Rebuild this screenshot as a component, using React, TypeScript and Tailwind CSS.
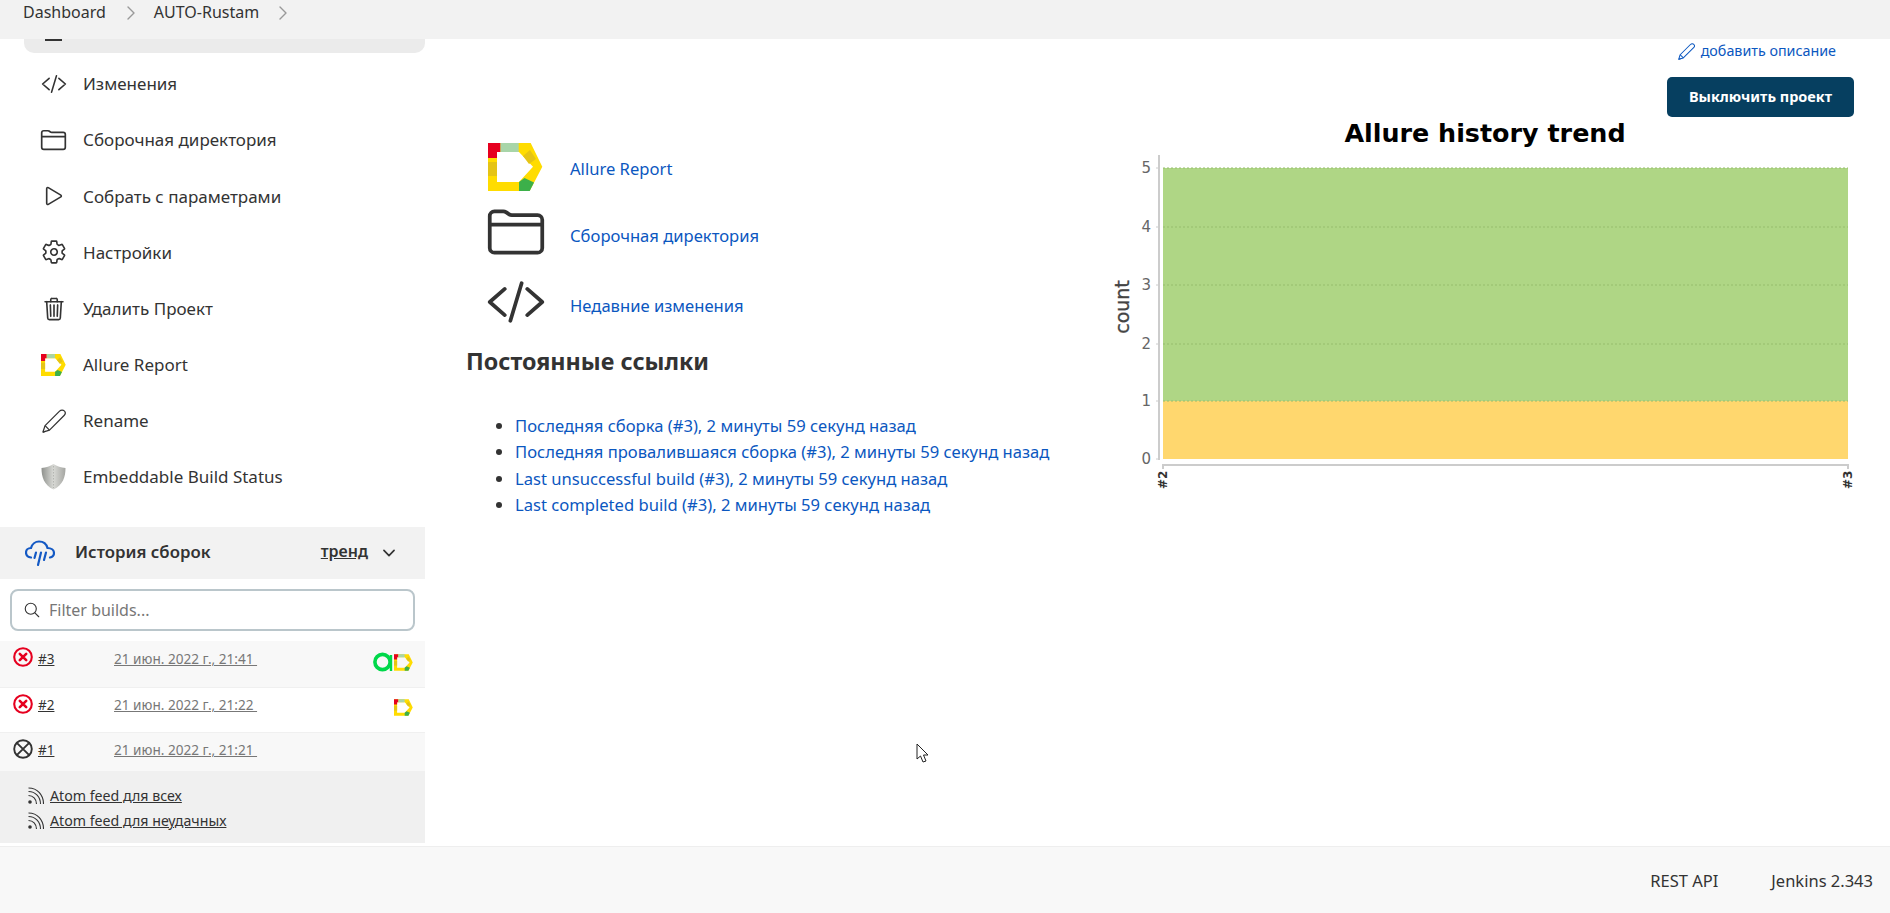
import { ChevronRight } from 'lucide-react';
import {
  IoChevronDown,
  IoCodeSlashOutline,
  IoFolderOutline,
  IoPlayOutline,
  IoSearchOutline,
  IoSettingsOutline,
  IoTrashOutline,
} from 'react-icons/io5';

function AllureIcon({ className }: { className: string }) {
  return (
    <svg viewBox="0 0 55 48" className={className}>
      <path
        fillRule="evenodd"
        fill="#ffdc00"
        d="M0 0H42.7L54.3 23.7 41.7 48H0ZM9 9V39H31L45 23.7 31 9Z"
      />
      <path fill="#e5c415" d="M0 19H9V33H0Z" />
      <path fill="#e5c415" d="M35 13L42 7 48 16 41 21Z" />
      <path fill="#e6001f" d="M0 0H12.5V9H9V15H0Z" />
      <path fill="#a8d5a8" d="M12.5 0H30.7V9H12.5Z" />
      <path fill="#3cb04a" d="M31 39L36.5 35 46 39.5 41.7 48H31Z" />
    </svg>
  );
}

function PencilIcon({ className, strokeWidth }: { className: string; strokeWidth: number }) {
  return (
    <svg viewBox="0 0 25 25" fill="none" stroke="currentColor" strokeWidth={strokeWidth} strokeLinejoin="round" className={className}>
      <path d="M1 24L3.2 17.3 18.3 2.2C19.8 0.7 22 0.7 23.2 2 24.5 3.3 24.4 5.4 23 6.8L7.8 22Z" />
      <path d="M3.2 17.3L7.8 22M1 24L4 23.2" />
    </svg>
  );
}

function RssIcon() {
  return (
    <svg viewBox="0 0 17 18" fill="none" stroke="#333" strokeWidth="1.1" className="h-[18px] w-[17px] shrink-0">
      <circle cx="3" cy="15" r="1.8" fill="#333" stroke="none" />
      <path d="M1.5 8.5C6 8.5 9.5 12 9.5 17" />
      <path d="M1.5 4.5C8.5 4.5 13.5 10 13.5 17" />
      <path d="M1.5 1C10.5 1 16.5 8 16.5 17" />
    </svg>
  );
}

function ShieldIcon() {
  return (
    <svg viewBox="0 0 25 26" className="h-[26px] w-[25px]">
      <defs>
        <linearGradient id="shield" x1="0" x2="1" y1="0" y2="0">
          <stop offset="0" stopColor="#8f918d" />
          <stop offset="0.5" stopColor="#d8d9d5" />
          <stop offset="1" stopColor="#a5a6a2" />
        </linearGradient>
      </defs>
      <path fill="url(#shield)" d="M12.5 0C9 2.5 5 3.5 0.5 4 0.5 13 3 21 12.5 25.5 22 21 24.5 13 24.5 4 20 3.5 16 2.5 12.5 0Z" />
      <path stroke="#b3b4b0" strokeDasharray="1.5 1.5" d="M12.5 2V24" />
    </svg>
  );
}

function CloudRainIcon() {
  return (
    <svg viewBox="0 0 30 27" fill="none" stroke="#1459c4" strokeWidth="2.2" strokeLinecap="round" className="h-[27px] w-[30px]">
      <path d="M6 17.5C2.5 17 1 14.5 1 12.5 1 10 3 8 6 8 7 4 10.5 1.5 14 1.5 18 1.5 21.5 4 22.5 8 26 8 29 10 29 13 29 15.5 27.5 17 25 17.5" />
      <path d="M11 12.5L9.5 18M16 12.5L13 25M21 12.5L19 20" />
    </svg>
  );
}

function FailedIcon() {
  return (
    <svg viewBox="0 0 20 20" fill="none" stroke="#e6001f" className="h-5 w-5 shrink-0">
      <circle cx="10" cy="10" r="8.8" strokeWidth="2.1" />
      <path d="M6.8 6.8L13.2 13.2M13.2 6.8L6.8 13.2" strokeWidth="2.6" strokeLinecap="round" />
    </svg>
  );
}

function AbortedIcon() {
  return (
    <svg viewBox="0 0 20 20" fill="none" stroke="#333" strokeWidth="1.9" className="h-5 w-5 shrink-0">
      <circle cx="10" cy="10" r="8.8" />
      <path d="M3.8 3.8L16.2 16.2M16.2 3.8L3.8 16.2" />
    </svg>
  );
}

function GreenBadge() {
  return (
    <svg viewBox="0 0 20 20" fill="none" stroke="#00d84a" className="h-5 w-5">
      <circle cx="9.5" cy="10" r="7.6" strokeWidth="3.6" />
      <path d="M18 3V19" strokeWidth="2.4" />
    </svg>
  );
}

function TrendChart() {
  const gridYs = [168, 227, 285, 344, 401];
  const labels = [
    { y: 459, t: '0' },
    { y: 401, t: '1' },
    { y: 344, t: '2' },
    { y: 285, t: '3' },
    { y: 227, t: '4' },
    { y: 168, t: '5' },
  ];

  return (
    <svg viewBox="1100 118 790 400" className="h-[400px] w-[790px] shrink-0 font-['DejaVu_Sans',sans-serif]">
      <text x="1485" y="142" textAnchor="middle" fontSize="25.4" fontWeight="700" fill="#000">
        Allure history trend
      </text>
      <rect x="1163" y="168" width="685" height="233" fill="#afd685" />
      <rect x="1163" y="401" width="685" height="58" fill="#ffd76e" />
      {gridYs.map(y => (
        <path key={y} d={`M1163 ${y}H1848`} stroke="#96bd6c" strokeDasharray="2 2" />
      ))}
      <path d="M1159 155V460" stroke="#ccc" strokeWidth="2" />
      <path d="M1163 465H1848M1163 464V469M1848 464V469" stroke="#ccc" strokeWidth="2" />
      {labels.map(l => (
        <g key={l.t}>
          <path d={`M1156 ${l.y}H1159`} stroke="#ccc" />
          <text x="1151" y={l.y + 5} textAnchor="end" fontSize="15" fill="#666">
            {l.t}
          </text>
        </g>
      ))}
      <text transform="translate(1129 307) rotate(-90)" textAnchor="middle" fontSize="19" fill="#444" stroke="#444" strokeWidth="0.3">
        count
      </text>
      <text transform="translate(1167 489) rotate(-90)" fontSize="12" fontWeight="700" fill="#333">
        #2
      </text>
      <text transform="translate(1852 489) rotate(-90)" fontSize="12" fontWeight="700" fill="#333">
        #3
      </text>
    </svg>
  );
}

const navItems = [
  { label: 'Изменения', icon: <IoCodeSlashOutline className="h-[26px] w-[26px]" /> },
  { label: 'Сборочная директория', icon: <IoFolderOutline className="h-[28px] w-[28px]" /> },
  { label: 'Собрать с параметрами', icon: <IoPlayOutline className="h-[26px] w-[26px]" /> },
  { label: 'Настройки', icon: <IoSettingsOutline className="h-[26px] w-[26px]" /> },
  { label: 'Удалить Проект', icon: <IoTrashOutline className="h-[26px] w-[26px]" /> },
  { label: 'Allure Report', icon: <AllureIcon className="h-[22px] w-[25px]" /> },
  { label: 'Rename', icon: <PencilIcon className="h-[24px] w-[24px]" strokeWidth={1.3} /> },
  { label: 'Embeddable Build Status', icon: <ShieldIcon /> },
];

const builds = [
  { id: '#3', date: '21 июн. 2022 г., 21:41\u00a0', rowClass: 'h-[47px] bg-[#f8f8f8] border-b border-[#f0f0f0]', textClass: 'mt-[1px]', failed: true, green: true, allure: true },
  { id: '#2', date: '21 июн. 2022 г., 21:22\u00a0', rowClass: 'h-[45px] bg-white border-b border-[#f0f0f0]', textClass: 'mt-0', failed: true, green: false, allure: true },
  { id: '#1', date: '21 июн. 2022 г., 21:21\u00a0', rowClass: 'h-[38px] bg-[#f8f8f8]', textClass: 'mt-0', failed: false, green: false, allure: false },
];

const permalinks = [
  'Последняя сборка (#3), 2 минуты 59 секунд назад',
  'Последняя провалившаяся сборка (#3), 2 минуты 59 секунд назад',
  'Last unsuccessful build (#3), 2 минуты 59 секунд назад',
  'Last completed build (#3), 2 минуты 59 секунд назад',
];

export default function App() {
  return (
    <div className="flex h-[913px] flex-col overflow-hidden bg-white font-['Noto_Sans',sans-serif] text-[#333]">
      {/* breadcrumbs */}
      <div className="flex h-[39px] shrink-0 items-start bg-[#f2f2f2] pl-[23px] pt-[1px] text-[16px] leading-[22px]">
        <span>Dashboard</span>
        <ChevronRight className="ml-[13px] h-[24px] w-[24px] text-[#999]" strokeWidth={1.4} />
        <span className="ml-[11px]">AUTO-Rustam</span>
        <ChevronRight className="ml-[12px] h-[24px] w-[24px] text-[#999]" strokeWidth={1.4} />
      </div>

      <div className="flex min-h-0 flex-1">
        {/* side panel */}
        <aside className="flex w-[425px] shrink-0 flex-col">
          <div className="ml-[24px] h-[14px] rounded-b-[10px] bg-[#ebebeb] pl-[21px]">
            <div className="h-[1.5px] w-[17px] bg-[#333]" />
          </div>
          <nav className="mt-[3px]">
            {navItems.map(item => (
              <div key={item.label} className="flex h-[56.15px] items-center text-[17px]">
                <div className="ml-[40px] flex w-[27px] justify-center">{item.icon}</div>
                <span className="ml-[16px]">{item.label}</span>
              </div>
            ))}
          </nav>

          <div className="mt-[22px] flex h-[52px] items-center bg-[#f2f2f2] pl-[25px] pr-[27px]">
            <CloudRainIcon />
            <span className="mb-[4px] ml-[20px] text-[16.8px] font-semibold">История сборок</span>
            <span className="mb-[4px] ml-auto text-[16px] font-semibold underline">тренд</span>
            <IoChevronDown className="ml-[12px] h-[18px] w-[18px]" />
          </div>

          <div className="px-[10px] pb-[10px] pt-[10px]">
            <div className="flex h-[42px] items-center rounded-[8px] border-2 border-[#bac6cb] bg-white pl-[11px]">
              <IoSearchOutline className="h-[18px] w-[18px]" />
              <span className="ml-[8px] text-[16px] text-[#777]">Filter builds...</span>
            </div>
          </div>

          {builds.map(b => (
            <div key={b.id} className={`flex items-start pl-[13px] pr-[12px] pt-[6px] ${b.rowClass}`}>
              {b.failed ? <FailedIcon /> : <AbortedIcon />}
              <a className={`ml-[5px] w-[76px] text-[13.5px] leading-[22px] underline ${b.textClass}`}>{b.id}</a>
              <a className={`text-[13.6px] leading-[22px] text-[#777] underline ${b.textClass}`}>{b.date}</a>
              <div className="ml-auto mt-[5px] flex items-center">
                {b.green && <GreenBadge />}
                {b.allure && <AllureIcon className="ml-[1px] h-[17px] w-[19px]" />}
              </div>
            </div>
          ))}

          <div className="h-[72px] bg-[#f0f0f0] pl-[27px] pt-[12px] text-[14.2px]">
            <div className="flex h-[25px] items-center">
              <RssIcon />
              <span className="ml-[6px] underline">Atom feed для всех</span>
            </div>
            <div className="flex h-[25px] items-center">
              <RssIcon />
              <span className="ml-[6px] underline">Atom feed для неудачных</span>
            </div>
          </div>
        </aside>

        {/* main panel */}
        <main className="relative min-w-0 flex-1">
          <div className="flex flex-col items-end pr-[36px]">
            <a className="mr-[18px] mt-[2px] flex h-[20px] items-center text-[14.3px] text-[#0b57c0]">
              <PencilIcon className="mr-[6px] h-[17px] w-[17px]" strokeWidth={1.5} />
              добавить описание
            </a>
            <button className="mt-[16px] h-[40px] w-[187px] rounded-[5px] bg-[#063f60] text-[14.5px] font-bold text-white">
              Выключить проект
            </button>
          </div>

          <div className="mt-[1px] flex items-start">
            <div className="w-[675px] shrink-0 pl-[41px] pt-[25px]">
              <div className="flex h-[48px] items-center pl-[22px]">
                <AllureIcon className="h-[48px] w-[55px]" />
                <a className="ml-[27px] mt-[4px] text-[16.6px] text-[#0b57c0]">Allure Report</a>
              </div>
              <div className="mt-[18px] flex h-[46px] items-center pl-[20px]">
                <IoFolderOutline className="h-[60px] w-[60px] text-[#333]" />
                <a className="ml-[24px] mt-[8px] text-[16.6px] text-[#0b57c0]">Сборочная директория</a>
              </div>
              <div className="mt-[26px] flex h-[42px] items-center pl-[20px]">
                <IoCodeSlashOutline className="h-[60px] w-[60px] text-[#333]" />
                <a className="ml-[24px] mt-[8px] text-[16.6px] text-[#0b57c0]">Недавние изменения</a>
              </div>
              <h2 className="mt-[20px] text-[23.3px] font-bold leading-[36px]">Постоянные ссылки</h2>
              <ul className="ml-[49px] mt-[34px] list-disc text-[16.6px] leading-[26.4px] text-[#0b57c0] marker:text-[#333]">
                {permalinks.map(link => (
                  <li key={link}>{link}</li>
                ))}
              </ul>
            </div>
            <div className="ml-auto">
              <TrendChart />
            </div>
          </div>

          {/* mouse pointer from the screen capture */}
          <svg viewBox="0 0 13 21" className="absolute left-[491px] top-[704px] h-[21px] w-[13px]">
            <path d="M1 1V16L4.5 13 7 19 10 18 7.5 12 12 12Z" fill="#fff" stroke="#222" />
          </svg>
        </main>
      </div>

      {/* footer */}
      <footer className="flex h-[67px] shrink-0 items-center justify-end gap-[53px] border-t border-[#eee] bg-[#f8f8f8] pr-[17px] pt-[2px] text-[16.5px]">
        <span>REST API</span>
        <span>Jenkins 2.343</span>
      </footer>
    </div>
  );
}
